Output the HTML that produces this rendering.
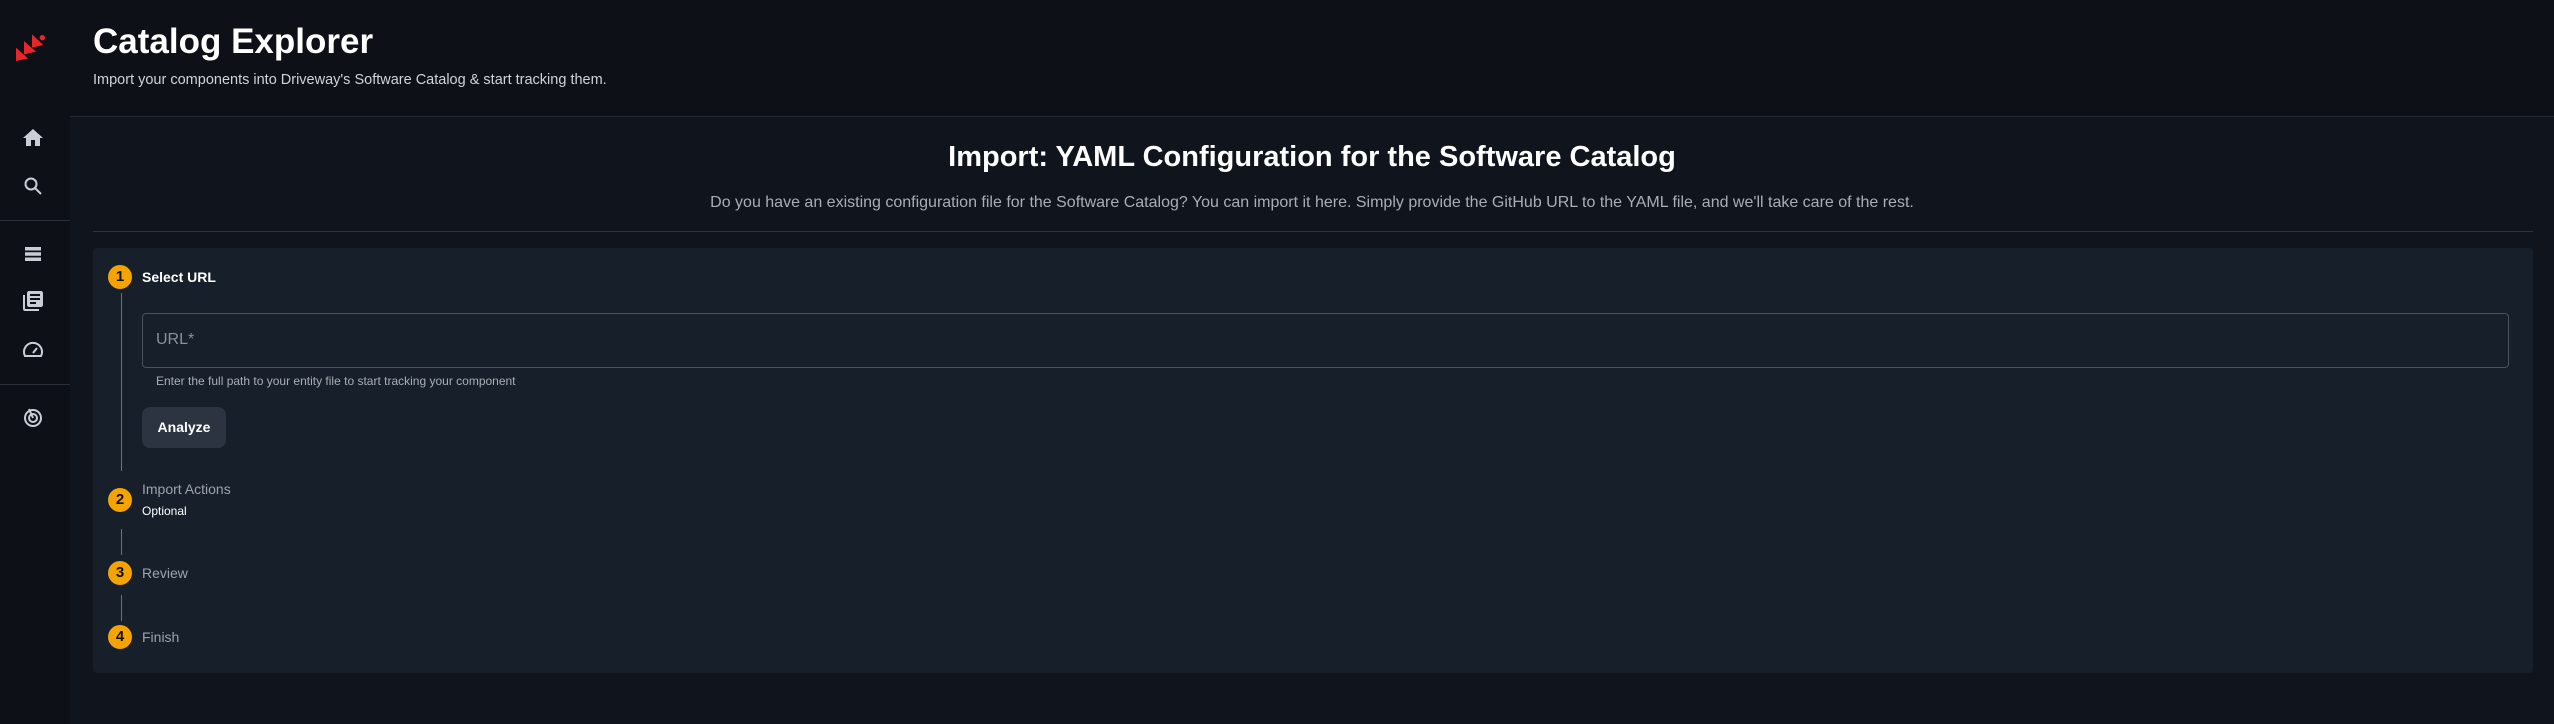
<!DOCTYPE html>
<html><head><meta charset="utf-8"><style>
*{margin:0;padding:0;box-sizing:border-box}
body{width:2554px;height:724px;background:#0d1017;font-family:"Liberation Sans",sans-serif;position:relative;overflow:hidden;color:#fff}
.side{position:absolute;left:0;top:0;width:70px;height:724px;background:#0d1017}
.hdiv{position:absolute;left:0;width:70px;height:1px;background:#2a2f38}
.ic{position:absolute;left:21px;width:24px;height:24px}
.main{position:absolute;left:70px;top:116px;right:0;bottom:0;background:#10141c;border-top:1px solid #262b33}
.hdr{position:absolute;left:93px}
.card{position:absolute;left:93px;top:248px;width:2440px;height:425px;background:#17202a;border-radius:4px}
.circ{position:absolute;left:108px;width:24px;height:24px;border-radius:50%;background:#f5a300;color:#111;font-size:15px;font-weight:bold;text-align:center;line-height:24px}
.vl{position:absolute;left:121px;width:1px;background:#6b7380}
.lbl{position:absolute;left:142px;font-size:14px;color:#9ca3ad}
</style></head><body>
<div class="side">
<svg style="position:absolute;left:10px;top:25px" width="45" height="45" viewBox="0 0 135 135">
<polygon points="18,68 18,108 54,100" fill="#e8262a"/>
<polygon points="42,48 42,88 78,80" fill="#e8262a"/>
<polygon points="66,28 66,68 100,60" fill="#e8262a"/>
<circle cx="97" cy="38" r="8" fill="#e8262a"/>
</svg>
<svg class="ic" style="top:126px" viewBox="0 0 24 24"><path d="M10 20v-6h4v6h5v-8h3L12 3 2 12h3v8z" fill="#c9ced6"/></svg>
<svg class="ic" style="top:174px" viewBox="0 0 24 24"><circle cx="10" cy="10" r="5.5" stroke="#c9ced6" stroke-width="2" fill="none"/><path d="M14 14l6 6" stroke="#c9ced6" stroke-width="2"/></svg>
<div class="hdiv" style="top:220px"></div>
<svg class="ic" style="top:242px" viewBox="0 0 24 24"><path d="M4 5h16v3.5H4zM4 10.25h16v3.5H4zM4 15.5h16V19H4z" fill="#c9ced6"/></svg>
<svg class="ic" style="top:289px" viewBox="0 0 24 24"><path d="M4 6H2v14c0 1.1.9 2 2 2h14v-2H4V6zm16-4H8c-1.1 0-2 .9-2 2v12c0 1.1.9 2 2 2h12c1.1 0 2-.9 2-2V4c0-1.1-.9-2-2-2zm-1 9H9V9h10v2zm-4 4H9v-2h6v2zm4-8H9V5h10v2z" fill="#c9ced6"/></svg>
<svg class="ic" style="top:338px" viewBox="0 0 24 24"><path d="M4 18a9 9 0 1 1 16 0z" stroke="#c9ced6" stroke-width="2" fill="none"/><path d="M12 15l4-5" stroke="#c9ced6" stroke-width="2"/></svg>
<div class="hdiv" style="top:384px"></div>
<svg class="ic" style="top:405px" viewBox="0 0 24 24"><circle cx="12" cy="13" r="8" stroke="#c9ced6" stroke-width="2" fill="none"/><circle cx="12" cy="13" r="4" stroke="#c9ced6" stroke-width="2" fill="none"/><path d="M12 13L8 4" stroke="#c9ced6" stroke-width="2"/></svg>
</div>
<div class="hdr" style="top:22px;font-size:35px;font-weight:bold">Catalog Explorer</div>
<div class="hdr" style="top:72px;font-size:14.5px;color:#d0d4da">Import your components into Driveway's Software Catalog &amp; start tracking them.</div>
<div class="main"></div>
<div style="position:absolute;left:70px;right:0;top:141px;text-align:center;font-size:29px;font-weight:bold">Import: YAML Configuration for the Software Catalog</div>
<div style="position:absolute;left:70px;right:0;top:194px;text-align:center;font-size:16px;color:#a9aeb6">Do you have an existing configuration file for the Software Catalog? You can import it here. Simply provide the GitHub URL to the YAML file, and we'll take care of the rest.</div>
<div style="position:absolute;left:93px;top:231px;width:2440px;height:1px;background:#2e343d"></div>
<div class="card"></div>
<div class="circ" style="top:265px">1</div>
<div class="lbl" style="top:269px;color:#fff;font-weight:bold">Select URL</div>
<div class="vl" style="top:293px;height:178px"></div>
<div style="position:absolute;left:142px;top:313px;width:2367px;height:55px;border:1px solid #4a525d;border-radius:4px"></div>
<div style="position:absolute;left:156px;top:331px;font-size:16px;color:#8a9099">URL*</div>
<div style="position:absolute;left:156px;top:374px;font-size:12px;color:#a9aeb6">Enter the full path to your entity file to start tracking your component</div>
<div style="position:absolute;left:142px;top:407px;width:84px;height:41px;background:#2b3440;border-radius:8px;font-size:14px;font-weight:bold;text-align:center;line-height:41px">Analyze</div>
<div class="circ" style="top:488px">2</div>
<div class="lbl" style="top:481px">Import Actions</div>
<div class="lbl" style="top:504px;font-size:12px;color:#fff">Optional</div>
<div class="vl" style="top:529px;height:26px"></div>
<div class="circ" style="top:561px">3</div>
<div class="lbl" style="top:565px">Review</div>
<div class="vl" style="top:595px;height:26px"></div>
<div class="circ" style="top:625px">4</div>
<div class="lbl" style="top:629px">Finish</div>
</body></html>
